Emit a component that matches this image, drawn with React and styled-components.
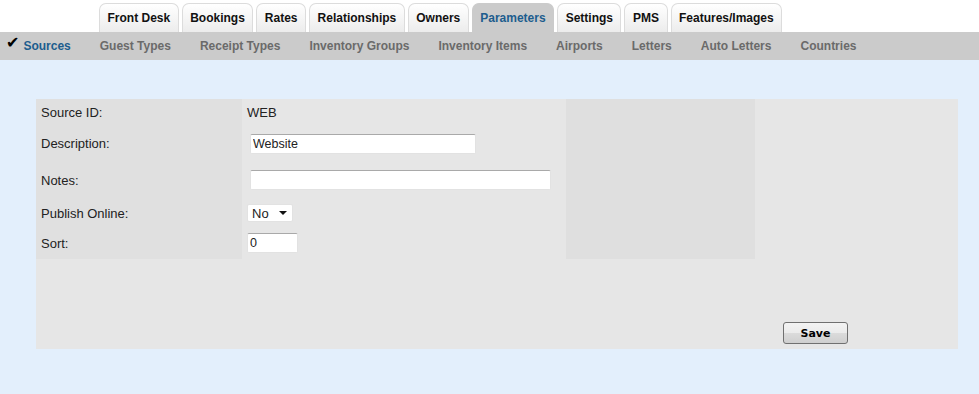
import React from 'react'
import styled, { createGlobalStyle } from 'styled-components'

const GlobalStyle = createGlobalStyle`
  html, body {
    margin: 0;
    padding: 0;
    background: #e3effc;
    font-family: "Liberation Sans", Arial, sans-serif;
    font-size: 13px;
    color: #222;
  }
`

const Page = styled.div`
  width: 979px;
  min-height: 394px;
  background: #e3effc;
`

const TabBar = styled.div`
  display: flex;
  align-items: flex-end;
  gap: 3px;
  height: 32px;
  padding-left: 99px;
  background: #fff;
`

const Tab = styled.div`
  height: 29px;
  padding: 0 7.5px;
  display: flex;
  align-items: center;
  box-sizing: border-box;
  border: 1px solid #dcdcdc;
  border-bottom: none;
  border-radius: 7px 7px 0 0;
  font-weight: bold;
  font-size: 12px;
  color: ${p => (p.$active ? '#1d5d8e' : '#111')};
  background: ${p => (p.$active ? '#cbcbcb' : 'linear-gradient(#ffffff, #ececec)')};
  ${p => p.$active && 'border-color: #cbcbcb;'}
`

const SubNav = styled.div`
  display: flex;
  align-items: center;
  height: 28px;
  background: #cbcbcb;
  padding-left: 6px;
`

const SubItem = styled.div`
  display: flex;
  align-items: center;
  gap: 4px;
  padding: 0 14.5px;
  font-weight: bold;
  font-size: 12px;
  color: ${p => (p.$active ? '#1d5d8e' : '#6a6a6a')};
  &:first-child {
    padding-left: 0;
  }
`

const Check = styled.span`
  color: #000;
  font-size: 16px;
  line-height: 1;
  margin-top: -6px;
  font-family: "DejaVu Sans", sans-serif;
`

const Main = styled.div`
  padding: 39px 21px 45px 36px;
`

const Panel = styled.div`
  display: grid;
  grid-template-columns: 206px 324px 189px 1fr;
  grid-template-rows: 160px 90px;
  background: #e6e6e6;
`

const Labels = styled.div`
  background: #e0e0e0;
  display: flex;
  flex-direction: column;
`

const Values = styled.div`
  display: flex;
  flex-direction: column;
`

const Side = styled.div`
  background: #dfdfdf;
`

const Row = styled.div`
  height: ${p => p.$h}px;
  display: flex;
  align-items: center;
  padding-left: ${p => p.$pad ?? 5}px;
  box-sizing: border-box;
`

const TextInput = styled.input`
  box-sizing: border-box;
  width: ${p => p.$w}px;
  height: 20px;
  margin: 0;
  padding: 1px 2px;
  border: 1px solid #e2e2e2;
  border-top-color: #a9a9a9;
  border-radius: 2px;
  background: #fff;
  font-family: "Liberation Sans", Arial, sans-serif;
  font-size: 12.5px;
  color: #222;
  outline: none;
`

const SelectWrap = styled.div`
  position: relative;
  width: 46px;
  height: 18px;
`

const Select = styled.select`
  appearance: none;
  box-sizing: border-box;
  width: 100%;
  height: 100%;
  margin: 0;
  padding: 0 0 0 4px;
  border: 1px solid #e2e2e2;
  border-radius: 2px;
  background: #fff;
  font-family: "Liberation Sans", Arial, sans-serif;
  font-size: 13px;
  color: #222;
  outline: none;
`

const Arrow = styled.span`
  position: absolute;
  right: 6px;
  top: 7px;
  width: 0;
  height: 0;
  border-left: 4px solid transparent;
  border-right: 4px solid transparent;
  border-top: 4px solid #111;
  pointer-events: none;
`

const Footer = styled.div`
  grid-column: 4;
  grid-row: 2;
  display: flex;
  align-items: flex-end;
  padding: 0 0 5px 28px;
`

const SaveButton = styled.button`
  width: 65px;
  height: 22px;
  border: 1px solid #707070;
  border-radius: 3px;
  background: linear-gradient(#f3f3f3 0%, #ebebeb 50%, #dbdbdb 51%, #cfcfcf 100%);
  font-family: "DejaVu Sans", Tahoma, sans-serif;
  font-weight: bold;
  font-size: 11px;
  color: #000;
  padding: 0;
`

const tabs = ['Front Desk', 'Bookings', 'Rates', 'Relationships', 'Owners', 'Parameters', 'Settings', 'PMS', 'Features/Images']
const subs = ['Sources', 'Guest Types', 'Receipt Types', 'Inventory Groups', 'Inventory Items', 'Airports', 'Letters', 'Auto Letters', 'Countries']

export default function App() {
  return (
    <>
      <GlobalStyle />
      <Page>
        <TabBar>
          {tabs.map(t => (
            <Tab key={t} $active={t === 'Parameters'}>{t}</Tab>
          ))}
        </TabBar>
        <SubNav>
          {subs.map(s => (
            <SubItem key={s} $active={s === 'Sources'}>
              {s === 'Sources' && <Check>✔</Check>}
              {s}
            </SubItem>
          ))}
        </SubNav>
        <Main>
          <Panel>
            <Labels>
              <Row $h={26}>Source ID:</Row>
              <Row $h={37}>Description:</Row>
              <Row $h={36}>Notes:</Row>
              <Row $h={30}>Publish Online:</Row>
              <Row $h={30}>Sort:</Row>
            </Labels>
            <Values>
              <Row $h={26}>WEB</Row>
              <Row $h={37} $pad={8}><TextInput $w={226} defaultValue="Website" /></Row>
              <Row $h={36} $pad={8}><TextInput $w={301} defaultValue="" /></Row>
              <Row $h={30}>
                <SelectWrap>
                  <Select defaultValue="No">
                    <option>No</option>
                    <option>Yes</option>
                  </Select>
                  <Arrow />
                </SelectWrap>
              </Row>
              <Row $h={30} $pad={5}><TextInput $w={51} defaultValue="0" /></Row>
            </Values>
            <Side />
            <div />
            <Footer>
              <SaveButton>Save</SaveButton>
            </Footer>
          </Panel>
        </Main>
      </Page>
    </>
  )
}
